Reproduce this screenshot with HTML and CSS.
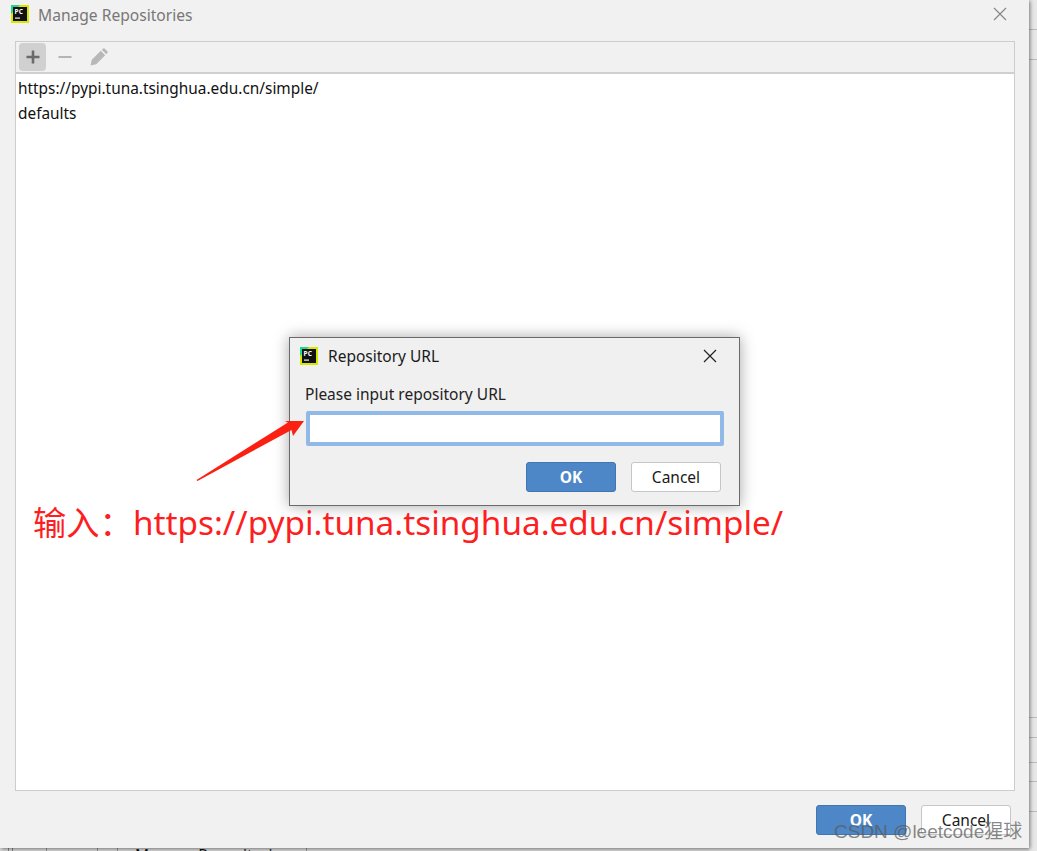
FILE: index.html
```html
<!DOCTYPE html>
<html lang="zh">
<head>
<meta charset="utf-8">
<title>Manage Repositories</title>
<link rel="stylesheet" href="styles.css">
</head>
<body>
<div class="desk">
  <main class="window">
    <header class="titlebar">
      <svg class="pc-icon" viewBox="0 0 18 18" aria-hidden="true">
        <rect width="18" height="18" fill="#d8e600"/>
        <path d="M0 0H9L0 9Z" fill="#21d789"/>
        <rect x="2" y="2" width="14" height="14" fill="#111"/>
        <rect x="4" y="12.5" width="5" height="1.2" fill="#eee"/>
        <text x="3.6" y="8.8" class="pc-text">PC</text>
      </svg>
      <span class="win-title">Manage Repositories</span>
      <svg class="close close-light" viewBox="0 0 14 14" aria-hidden="true"><path d="M1 1L13 13M13 1L1 13"/></svg>
    </header>
    <section class="panel">
      <div class="toolbar">
        <span class="tool tool-on">
          <svg viewBox="0 0 16 16" aria-hidden="true"><path class="ic-dark" d="M8 1.5V14.5M1.5 8H14.5"/></svg>
        </span>
        <span class="tool">
          <svg viewBox="0 0 16 16" aria-hidden="true"><path class="ic-soft" d="M1.5 8H14.5"/></svg>
        </span>
        <span class="tool tool-pencil">
          <svg viewBox="0 0 18 18" aria-hidden="true"><path class="ic-fill" d="M0.5 17.5L1.8 11.8L10.8 2.8L15.2 7.2L6.2 16.2ZM11.8 1.8L13.2 0.5Q13.9 0 14.6 0.5L17.5 3.4Q18 4.1 17.5 4.8L16.2 6.2Z"/></svg>
        </span>
      </div>
      <ul class="repo-list">
        <li>https://pypi.tuna.tsinghua.edu.cn/simple/</li>
        <li>defaults</li>
      </ul>
    </section>
    <footer class="actions">
      <button class="btn btn-primary">OK</button>
      <button class="btn">Cancel</button>
    </footer>
  </main>
  <div class="side-strip"><i></i><i></i><i class="gap"></i><i class="s20"></i><i class="s25"></i><i class="s19"></i><i></i></div>
  <div class="bottom-strip"><span class="bottom-text">Manage Repositories</span></div>
</div>

<div class="dialog">
  <header class="dlg-title">
    <svg class="pc-icon" viewBox="0 0 18 18" aria-hidden="true">
      <rect width="18" height="18" fill="#d8e600"/>
      <path d="M0 0H9L0 9Z" fill="#21d789"/>
      <rect x="2" y="2" width="14" height="14" fill="#111"/>
      <rect x="4" y="12.5" width="5" height="1.2" fill="#eee"/>
      <text x="3.6" y="8.8" class="pc-text">PC</text>
    </svg>
    <span>Repository URL</span>
    <svg class="close" viewBox="0 0 14 14" aria-hidden="true"><path d="M1 1L13 13M13 1L1 13"/></svg>
  </header>
  <label class="dlg-label">Please input repository URL</label>
  <input class="dlg-input" type="text">
  <div class="dlg-actions">
    <button class="btn btn-primary">OK</button>
    <button class="btn">Cancel</button>
  </div>
</div>

<svg class="arrow" viewBox="0 0 120 80" aria-hidden="true"><path d="M1.5 68L93 10.5L90 9L109 9L98 24L96.5 18L2.5 69Z"/></svg>
<div class="note">输入：https://pypi.tuna.tsinghua.edu.cn/simple/</div>
<div class="watermark">CSDN @leetcode猩球</div>
</body>
</html>
```
FILE: styles.css
```css
* { box-sizing: border-box; }
html, body { margin: 0; height: 100%; }
body {
  width: 1037px;
  height: 851px;
  overflow: hidden;
  position: relative;
  background: #f0f0f0;
  font-family: "Noto Sans", "Noto Sans CJK SC", sans-serif;
  font-size: 15.5px;
  color: #1a1a1a;
}
.desk { display: grid; grid-template-columns: 1029px 8px; grid-template-rows: 848px 3px; height: 851px; }
.window {
  background: #f1f1f1;
  display: flex;
  flex-direction: column;
  padding: 0 14px 0 15px;
  box-shadow: 1px 1px 4px rgba(0,0,0,.5);
  position: relative;
  z-index: 1;
}
.titlebar { height: 41px; display: flex; align-items: flex-start; padding-top: 5px; margin-left: -4px; }
.pc-icon { width: 18px; height: 18px; flex: none; }
.pc-text { font: 700 6.5px "Noto Sans", sans-serif; fill: #fff; }
.win-title { margin: 1px 0 0 9px; color: #777; font-size: 15.6px; line-height: 19px; }
.close { width: 14px; height: 14px; margin-left: auto; fill: none; stroke: #222; stroke-width: 1.2; }
.close-light { stroke: #888; margin: 2px 8px 0 auto; }
.panel {
  height: 750px;
  flex: none;
  border: 1px solid #cdcdcd;
  background: #fff;
  display: flex;
  flex-direction: column;
}
.toolbar {
  height: 32px;
  flex: none;
  background: #f1f1f1;
  border-bottom: 2px solid #d0d0d0;
  display: flex;
  align-items: center;
  gap: 5px;
  padding-left: 3px;
}
.tool { width: 27px; height: 28px; border-radius: 4px; display: flex; align-items: center; justify-content: center; }
.tool svg { width: 16px; height: 16px; }
.tool-on { background: #d0d0d0; }
.tool-pencil { margin-left: 2px; }
.tool-pencil svg { width: 18px; height: 18px; }
.ic-dark { fill: none; stroke: #6a6a6a; stroke-width: 2.6; }
.ic-soft { fill: none; stroke: #b4b4b4; stroke-width: 2; }
.ic-fill { fill: #b8b8b8; }
.repo-list { list-style: none; margin: 0; padding: 2px 0 0 2px; }
.repo-list li { height: 25px; line-height: 25px; font-size: 15.4px; color: #111; }
.actions { display: flex; justify-content: flex-end; gap: 15px; padding: 14px 4px 0 0; }
.btn {
  width: 90px;
  height: 30px;
  border: 1px solid #c6c6c6;
  border-radius: 3px;
  background: #fff;
  font: 15.5px "Noto Sans", sans-serif;
  color: #1a1a1a;
  padding: 0;
}
.btn-primary { background: #4d87c7; border-color: #3f75b0; color: #fff; font-weight: 700; }
.side-strip {
  background: #e8e8e8;
  display: flex;
  flex-direction: column;
  grid-row: 1 / 3;
  grid-column: 2;
}
.side-strip i { display: block; height: 30px; flex: none; border-bottom: 1px solid #bbb; }
.side-strip .gap { height: 658px; }
.side-strip .s20 { height: 20px; }
.side-strip .s25 { height: 25px; }
.side-strip .s19 { height: 19px; }
.bottom-strip {
  background-color: #dedede;
  background-image:
    linear-gradient(#888, #888), linear-gradient(#888, #888), linear-gradient(#999, #999),
    linear-gradient(#999, #999), linear-gradient(#999, #999), linear-gradient(#999, #999);
  background-size: 1px 100%;
  background-repeat: no-repeat;
  background-position: 8px 0, 12px 0, 46px 0, 97px 0, 117px 0, 306px 0;
  overflow: hidden;
  padding-left: 135px;
  height: 3px;
  line-height: 14px;
}
.bottom-text { font-size: 15.5px; color: #111; }
.dialog {
  position: absolute;
  left: 289px;
  top: 337px;
  width: 451px;
  height: 169px;
  background: #f0f0f0;
  border: 1px solid #6a6a6a;
  box-shadow: 0 0 14px rgba(0,0,0,.35);
  padding: 0 18px 0 15px;
  display: flex;
  flex-direction: column;
  z-index: 2;
}
.dlg-title { display: flex; align-items: center; height: 36px; margin: 0 4px 0 -5px; font-size: 15.5px; color: #1a1a1a; }
.dlg-title span { margin-left: 10px; }
.dlg-label { margin-top: 10px; line-height: 20px; font-size: 15.5px; color: #222; }
.dlg-input {
  display: block;
  flex: none;
  width: 418px;
  height: 35px;
  margin: 7px 0 0 1px;
  border: 4px solid #90b9e8;
  border-radius: 2px;
  background: #fff;
  outline: none;
}
.dlg-actions { display: flex; justify-content: flex-end; gap: 15px; margin-top: 16px; }
.arrow { position: absolute; left: 195px; top: 412px; width: 120px; height: 80px; z-index: 3; }
.arrow path { fill: #fb2012; }
.note {
  position: absolute;
  left: 33px;
  top: 498px;
  font-size: 33.3px;
  line-height: 48px;
  color: #fd1f1f;
  white-space: nowrap;
  z-index: 3;
}
.watermark {
  position: absolute;
  left: 834px;
  top: 819px;
  font: 19px/26px "Liberation Sans", "Noto Sans CJK SC", sans-serif;
  color: rgba(90,90,90,.72);
  white-space: nowrap;
  z-index: 4;
}
```
